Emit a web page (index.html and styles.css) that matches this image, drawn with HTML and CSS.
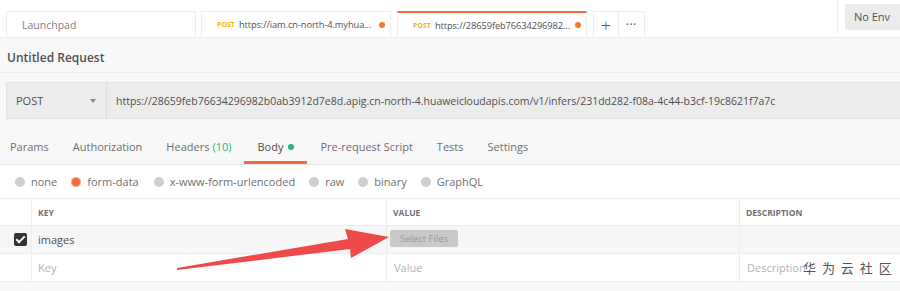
FILE: index.html
```html
<!DOCTYPE html>
<html lang="en">
<head>
    <meta charset="UTF-8">
    <title>Untitled Request</title>
    <link rel="stylesheet" href="styles.css">
</head>
<body>
    <header class="tabbar">
        <div class="tab">Launchpad</div>
        <div class="tab">
            <span class="method">POST</span>
            <span class="tab-url">https://iam.cn-north-4.myhua...</span>
            <span class="dirty"></span>
        </div>
        <div class="tab active">
            <span class="method">POST</span>
            <span class="tab-url">https://28659feb76634296982...</span>
            <span class="dirty"></span>
        </div>
        <div class="tab-btn plus">+</div>
        <div class="tab-btn dots">&bull;&bull;&bull;</div>
        <div class="env">
            <div class="env-btn">No Env</div>
        </div>
    </header>

    <main class="builder">
        <div class="req-name">Untitled Request</div>

        <div class="url-bar">
            <div class="method-select">POST <span class="caret"></span></div>
            <div class="url-input">https://28659feb76634296982b0ab3912d7e8d.apig.cn-north-4.huaweicloudapis.com/v1/infers/231dd282-f08a-4c44-b3cf-19c8621f7a7c</div>
        </div>

        <nav class="req-tabs">
            <span class="req-tab">Params</span>
            <span class="req-tab">Authorization</span>
            <span class="req-tab">Headers <span class="count">(10)</span></span>
            <span class="req-tab current">Body <span class="green-dot"></span></span>
            <span class="req-tab">Pre-request Script</span>
            <span class="req-tab">Tests</span>
            <span class="req-tab">Settings</span>
        </nav>

        <div class="body-modes">
            <label class="mode"><span class="radio"></span>none</label>
            <label class="mode"><span class="radio on"></span>form-data</label>
            <label class="mode"><span class="radio"></span>x-www-form-urlencoded</label>
            <label class="mode"><span class="radio"></span>raw</label>
            <label class="mode"><span class="radio"></span>binary</label>
            <label class="mode"><span class="radio"></span>GraphQL</label>
        </div>

        <div class="kv-table">
            <div class="kv-row head">
                <div class="cell check"></div>
                <div class="cell key">KEY</div>
                <div class="cell value">VALUE</div>
                <div class="cell desc">DESCRIPTION</div>
            </div>
            <div class="kv-row hover">
                <div class="cell check"><span class="checkbox"></span></div>
                <div class="cell key">images</div>
                <div class="cell value"><span class="file-btn">Select Files</span></div>
                <div class="cell desc"></div>
            </div>
            <div class="kv-row">
                <div class="cell check"></div>
                <div class="cell key placeholder">Key</div>
                <div class="cell value placeholder">Value</div>
                <div class="cell desc placeholder">Description</div>
            </div>
        </div>
    </main>

    <div class="watermark">华 为 云 社 区</div>

    <svg class="arrow" width="900" height="291" viewBox="0 0 900 291">
        <polygon points="177,268 348,239 345,229 389,237 351,258 350,249 177,270" fill="#ee4a4a"/>
    </svg>
</body>
</html>
```

FILE: styles.css
```css
body {
    margin: 0;
    width: 900px;
    height: 291px;
    overflow: hidden;
    font-family: 'Open Sans', 'Noto Sans', sans-serif;
    font-size: 11px;
    color: #505050;
    background-color: #f8f8f8;
    position: relative;
}

/* top tab strip */
.tabbar {
    display: flex;
    align-items: flex-end;
    height: 38px;
    padding-left: 6px;
    background-color: #fff;
    border-bottom: 1px solid #ececec;
    box-sizing: border-box;
}
.tab {
    display: flex;
    align-items: center;
    width: 190px;
    height: 26px;
    margin-right: 5px;
    padding: 0 5px 0 15px;
    box-sizing: border-box;
    border: 1px solid #ededed;
    border-bottom: none;
    color: #808080;
    font-size: 10.5px;
    white-space: nowrap;
}
.tab.active {
    border-top: 2px solid #f26b3a;
    margin-left: 1px;
}
.method {
    font-size: 7px;
    font-weight: 700;
    color: #f5b400;
    margin-right: 4px;
}
.tab-url {
    color: #505050;
    font-size: 9.3px;
    letter-spacing: -0.1px;
    flex: 1;
}
.dirty {
    width: 6px;
    height: 6px;
    border-radius: 50%;
    background-color: #ee7b30;
}
.tab-btn {
    width: 26px;
    height: 26px;
    display: flex;
    align-items: center;
    justify-content: center;
    border: 1px solid #ededed;
    border-bottom: none;
    box-sizing: border-box;
    color: #555;
}
.tab-btn.plus {
    font-size: 18px;
    font-weight: 300;
    margin-left: 1px;
}
.tab-btn.dots {
    font-size: 7px;
    letter-spacing: 1px;
    border-left: none;
    color: #666;
}
.env {
    margin-left: auto;
    align-self: stretch;
    border-left: 1px solid #ececec;
    padding: 4px 0 0 7px;
    height: 33px;
    box-sizing: border-box;
}
.env-btn {
    width: 46px;
    height: 26px;
    line-height: 26px;
    padding-left: 9px;
    background-color: #ececec;
    color: #505050;
    white-space: nowrap;
    overflow: hidden;
}

/* request builder */
.req-name {
    height: 34px;
    line-height: 39px;
    padding-left: 7px;
    font-size: 12px;
    font-weight: 600;
    color: #505050;
    border-bottom: 1px solid #ececec;
}
.url-bar {
    display: flex;
    margin: 9px 0 0 6px;
    height: 35px;
    border: 1px solid #e2e2e2;
    border-right: none;
    background-color: #ececec;
}
.method-select {
    width: 100px;
    display: flex;
    align-items: center;
    padding-left: 9px;
    box-sizing: border-box;
    border-right: 1px solid #dcdcdc;
    color: #505050;
}
.caret {
    margin-left: auto;
    margin-right: 10px;
    width: 0;
    height: 0;
    border-left: 3px solid transparent;
    border-right: 3px solid transparent;
    border-top: 4px solid #888;
}
.url-input {
    flex: 1;
    display: flex;
    align-items: center;
    padding-left: 9px;
    font-size: 10.5px;
    white-space: nowrap;
    overflow: hidden;
    color: #505050;
}

.req-tabs {
    display: flex;
    height: 35px;
    margin-top: 11px;
    padding-left: 10px;
    border-bottom: 1px solid #e6e6e6;
    box-sizing: border-box;
}
.req-tab {
    display: flex;
    align-items: center;
    margin-right: 24px;
    color: #707070;
    border-bottom: 3px solid transparent;
    padding-top: 2px;
    white-space: nowrap;
}
.req-tab .count {
    color: #26b47f;
    margin-left: 3px;
}
.req-tab.current {
    color: #505050;
    border-bottom-color: #f26b3a;
    margin-left: -11px;
    padding: 2px 13px 0 13px;
    margin-right: 13px;
}
.green-dot {
    width: 6px;
    height: 6px;
    border-radius: 50%;
    background-color: #26b47f;
    margin-left: 5px;
}

.body-modes {
    display: flex;
    align-items: center;
    height: 33px;
    padding-left: 15px;
    background-color: #fff;
}
.mode {
    display: flex;
    align-items: center;
    margin-right: 14px;
    color: #707070;
}
.mode:nth-child(2) {
    margin-right: 15px;
}
.radio {
    width: 10px;
    height: 10px;
    border-radius: 50%;
    background-color: #cfcfcf;
    margin-right: 6px;
}
.radio.on {
    background-color: #f26b3a;
    box-shadow: 0 0 0 1px #f9b8a0 inset;
}

/* key/value table */
.kv-table {
    border-top: 1px solid #ececec;
    background-color: #fff;
}
.kv-row {
    display: flex;
    height: 27px;
    border-bottom: 1px solid #ececec;
}
.kv-row.head {
    height: 26px;
}
.kv-row.hover {
    background-color: #f6f6f6;
}
.cell {
    display: flex;
    align-items: center;
    padding-left: 6px;
    box-sizing: border-box;
    border-right: 1px solid #ececec;
}
.cell.check {
    width: 32px;
    padding-left: 14px;
}
.cell.key {
    width: 355px;
    color: #505050;
}
.cell.value {
    width: 353px;
    padding-left: 3px;
}
.cell.desc {
    flex: 1;
    border-right: none;
    padding-left: 7px;
}
.kv-row.head .cell {
    font-size: 8.5px;
    font-weight: 700;
    color: #707070;
}
.kv-row.head .cell.value,
.kv-row.head .cell.desc {
    padding-left: 6px;
}
.cell.placeholder {
    color: #b3b3b3;
}
.cell.value.placeholder {
    padding-left: 7px;
}
.checkbox {
    width: 13px;
    height: 13px;
    border-radius: 2px;
    background-color: #333;
    position: relative;
}
.checkbox::after {
    content: "";
    position: absolute;
    left: 4px;
    top: 1px;
    width: 3px;
    height: 7px;
    border-right: 2px solid #fff;
    border-bottom: 2px solid #fff;
    transform: rotate(45deg);
}
.file-btn {
    display: inline-block;
    width: 68px;
    height: 17px;
    line-height: 17px;
    margin-top: -2px;
    text-align: center;
    font-size: 9.5px;
    color: #9a9a9a;
    background-color: #c9c9c9;
    border-radius: 2px;
}

.watermark {
    position: absolute;
    left: 803px;
    top: 258px;
    font-family: 'Noto Sans CJK SC', sans-serif;
    font-size: 13px;
    color: #555;
    word-spacing: 3px;
}
.arrow {
    position: absolute;
    left: 0;
    top: 0;
    pointer-events: none;
}
```
